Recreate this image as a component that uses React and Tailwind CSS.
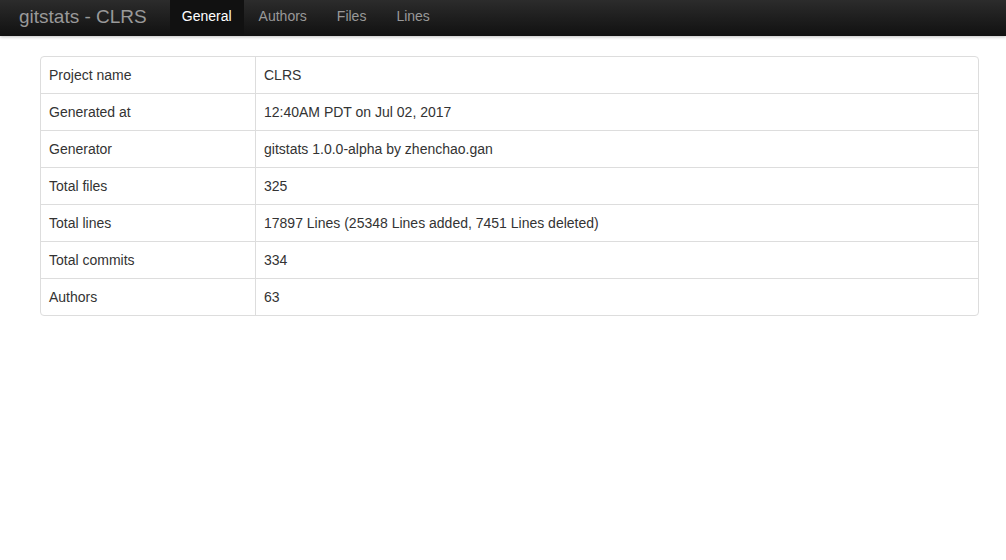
const ROWS = [
  ["Project name", "CLRS"],
  ["Generated at", "12:40AM PDT on Jul 02, 2017"],
  ["Generator", "gitstats 1.0.0-alpha by zhenchao.gan"],
  ["Total files", "325"],
  ["Total lines", "17897 Lines (25348 Lines added, 7451 Lines deleted)"],
  ["Total commits", "334"],
  ["Authors", "63"],
];

const NAV = ["General", "Authors", "Files", "Lines"];

export default function App() {
  return (
    <div className="min-h-[560px] bg-white font-['Liberation_Sans',Arial,sans-serif] text-[14px] text-[#333]">
      <div className="h-[36px] bg-gradient-to-b from-[#2c2c2c] to-[#111] flex items-stretch shadow-[0_1px_3px_rgba(0,0,0,0.25)]">
        <div className="pl-[19px] pr-[21px] flex items-center text-[19px] font-light text-[#999] leading-none pb-[4px]">
          gitstats - CLRS
        </div>
        <div className="flex items-stretch pl-[2px]">
          {NAV.map((n, i) => (
            <div
              key={n}
              className={
                i === 0
                  ? "px-[12px] flex items-center bg-[#111] text-white pb-[4px]"
                  : "px-[15px] flex items-center text-[#999] pb-[4px]"
              }
            >
              {n}
            </div>
          ))}
        </div>
      </div>

      <div className="pt-[20px] px-[40px] pr-[27px]">
        <div className="border border-[#ddd] rounded-[4px] overflow-hidden">
          {ROWS.map(([k, v], i) => (
            <div key={k} className={"flex " + (i > 0 ? "border-t border-[#ddd]" : "")}>
              <div className="w-[215px] shrink-0 px-[8px] py-[8px] leading-[20px] border-r border-[#ddd]">{k}</div>
              <div className="flex-1 px-[8px] py-[8px] leading-[20px]">{v}</div>
            </div>
          ))}
        </div>
      </div>
    </div>
  );
}
